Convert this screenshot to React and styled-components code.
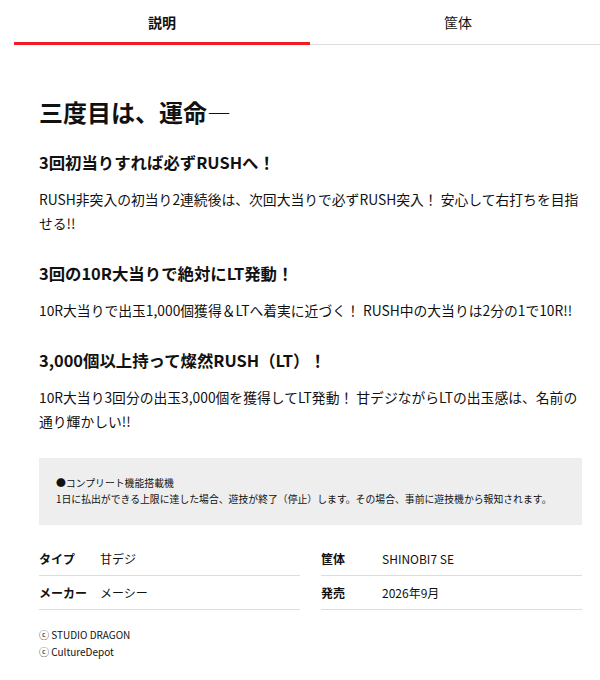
import React, { useState } from "react";
import styled, { createGlobalStyle } from "styled-components";

const Global = createGlobalStyle`
  html, body {
    margin: 0;
    padding: 0;
    background: #fff;
    overflow-x: hidden;
  }
  body {
    font-family: "Noto Sans CJK JP", "Noto Sans", sans-serif;
    color: #111;
  }
  * { box-sizing: border-box; }
`;

const Page = styled.div`
  width: 600px;
`;

const TabBar = styled.div`
  display: flex;
  align-items: flex-end;
  padding-left: 14px;
  height: 45px;
`;

const Tab = styled.button`
  flex: 0 0 296px;
  height: 100%;
  border: none;
  background: none;
  padding: ${(p) => (p.$active ? "2px" : "0")} 0 0;
  font-family: inherit;
  font-size: 14px;
  font-weight: ${(p) => (p.$active ? 700 : 400)};
  color: #111;
  border-bottom: ${(p) => (p.$active ? "3px solid #ee1c25" : "1px solid #dddddd")};
  cursor: pointer;
  line-height: 1;
`;

const Content = styled.div`
  padding: 0 18px 40px 39px;
`;

const Title = styled.h2`
  margin: 50px 0 0;
  font-size: 24px;
  line-height: 34px;
  font-weight: 700;
`;

const SubTitle = styled.h3`
  margin: ${(p) => (p.$first ? "20px" : "0")} 0 12px;
  font-size: 16.4px;
  line-height: 26px;
  font-weight: 700;
`;

const Body = styled.p`
  margin: 0 0 25px;
  font-size: 13.8px;
  line-height: 24px;
`;

const Notice = styled.div`
  margin-top: 25px;
  background: #eeeeee;
  padding: 17px 17px 18px;
  font-size: 9.85px;
  line-height: 16px;
`;

const InfoGrid = styled.div`
  display: grid;
  grid-template-columns: 1fr 1fr;
  column-gap: 21px;
  margin-top: 17px;
`;

const InfoRow = styled.div`
  display: flex;
  align-items: center;
  height: 34px;
  border-bottom: 1px solid #dddddd;
  font-size: 12px;
`;

const Label = styled.span`
  flex: 0 0 61px;
  font-weight: 700;
`;

const Value = styled.span``;

const Credits = styled.div`
  margin-top: 16px;
  font-size: 10px;
  line-height: 17px;
`;

const info = [
  ["タイプ", "甘デジ"],
  ["筐体", "SHINOBI7 SE"],
  ["メーカー", "メーシー"],
  ["発売", "2026年9月"],
];

export default function App() {
  const [tab, setTab] = useState(0);
  return (
    <Page>
      <Global />
      <TabBar>
        <Tab $active={tab === 0} onClick={() => setTab(0)}>説明</Tab>
        <Tab $active={tab === 1} onClick={() => setTab(1)}>筐体</Tab>
      </TabBar>
      <Content>
        <Title>三度目は、運命―</Title>
        <SubTitle $first>3回初当りすれば必ずRUSHへ！</SubTitle>
        <Body>
          RUSH非突入の初当り2連続後は、次回大当りで必ずRUSH突入！ 安心して右打ちを目指せる!!
        </Body>
        <SubTitle>3回の10R大当りで絶対にLT発動！</SubTitle>
        <Body>
          10R大当りで出玉1,000個獲得＆LTへ着実に近づく！ RUSH中の大当りは2分の1で10R!!
        </Body>
        <SubTitle>3,000個以上持って燦然RUSH（LT）！</SubTitle>
        <Body>
          10R大当り3回分の出玉3,000個を獲得してLT発動！ 甘デジながらLTの出玉感は、名前の通り輝かしい!!
        </Body>
        <Notice>
          ●コンプリート機能搭載機
          <br />
          1日に払出ができる上限に達した場合、遊技が終了（停止）します。その場合、事前に遊技機から報知されます。
        </Notice>
        <InfoGrid>
          {info.map(([k, v]) => (
            <InfoRow key={k}>
              <Label>{k}</Label>
              <Value>{v}</Value>
            </InfoRow>
          ))}
        </InfoGrid>
        <Credits>
          ⓒ STUDIO DRAGON
          <br />
          ⓒ CultureDepot
        </Credits>
      </Content>
    </Page>
  );
}
